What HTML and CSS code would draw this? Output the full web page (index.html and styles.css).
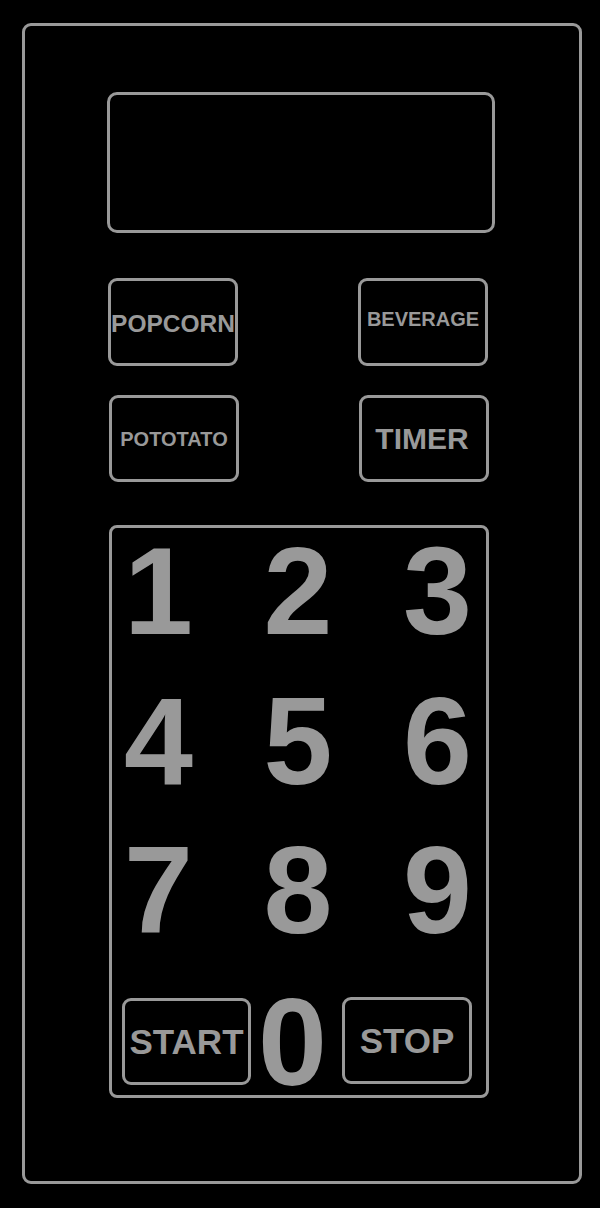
FILE: index.html
```html
<!DOCTYPE html>
<html lang="en">
<head>
<meta charset="utf-8">
<title>Microwave Panel</title>
<link rel="stylesheet" href="styles.css">
</head>
<body>
<div class="frame">
  <div class="display"></div>
  <div class="btn-row row-a">
    <div class="btn t-popcorn">POPCORN</div>
    <div class="btn t-beverage">BEVERAGE</div>
  </div>
  <div class="btn-row row-b">
    <div class="btn t-potato">POTOTATO</div>
    <div class="btn t-timer">TIMER</div>
  </div>
  <div class="keypad">
    <div class="digits">
      <span class="digit">1</span>
      <span class="digit">2</span>
      <span class="digit">3</span>
      <span class="digit">4</span>
      <span class="digit">5</span>
      <span class="digit">6</span>
      <span class="digit">7</span>
      <span class="digit">8</span>
      <span class="digit">9</span>
    </div>
    <div class="bottom-row">
      <div class="btn t-start">START</div>
      <span class="digit zero">0</span>
      <div class="btn t-stop">STOP</div>
    </div>
  </div>
</div>
</body>
</html>
```
FILE: styles.css
```css
html, body {
  margin: 0;
  padding: 0;
  background: #000;
}
body {
  width: 600px;
  height: 1208px;
  overflow: hidden;
  font-family: "Liberation Sans", Arial, sans-serif;
  font-weight: bold;
  color: #999;
}
.frame {
  box-sizing: border-box;
  margin: 23px 0 0 22px;
  width: 560px;
  height: 1161px;
  border: 3px solid #999;
  border-radius: 9px;
  padding-top: 66px;
}
.display {
  box-sizing: border-box;
  margin-left: 82px;
  width: 388px;
  height: 141px;
  border: 3px solid #999;
  border-radius: 10px;
}
.btn-row {
  display: flex;
  justify-content: space-between;
  width: 380px;
}
.row-a {
  margin: 45px 0 0 83px;
}
.row-b {
  margin: 29px 0 0 84px;
}
.btn {
  box-sizing: border-box;
  width: 130px;
  height: 88px;
  border: 3px solid #999;
  border-radius: 9px;
  display: flex;
  align-items: center;
  justify-content: center;
  white-space: nowrap;
  line-height: 1;
}
.row-b .btn {
  height: 87px;
}
.t-popcorn { font-size: 24.5px; padding-top: 4px; }
.t-beverage { font-size: 20px; padding-bottom: 7px; }
.t-potato { font-size: 20px; }
.t-timer { font-size: 30px; padding-right: 4px; }
.keypad {
  box-sizing: border-box;
  margin: 43px 0 0 84px;
  width: 380px;
  height: 573px;
  border: 3px solid #999;
  border-radius: 8px;
  padding: 1px 0 0 12px;
}
.digits {
  display: grid;
  grid-template-columns: repeat(3, 139.5px);
  grid-auto-rows: 124px;
  row-gap: 25.5px;
}
.digit {
  font-size: 124px;
  line-height: 124px;
}
.bottom-row {
  display: flex;
  align-items: center;
  margin-top: 40px;
  height: 100px;
}
.zero {
  line-height: 100px;
  margin: 0 15px 0 7px;
}
.t-start {
  width: 129px;
  height: 87px;
  margin: 0 0 2px -2px;
  font-size: 35px;
}
.t-stop {
  width: 130px;
  height: 87px;
  margin-bottom: 4px;
  font-size: 35px;
}
```
